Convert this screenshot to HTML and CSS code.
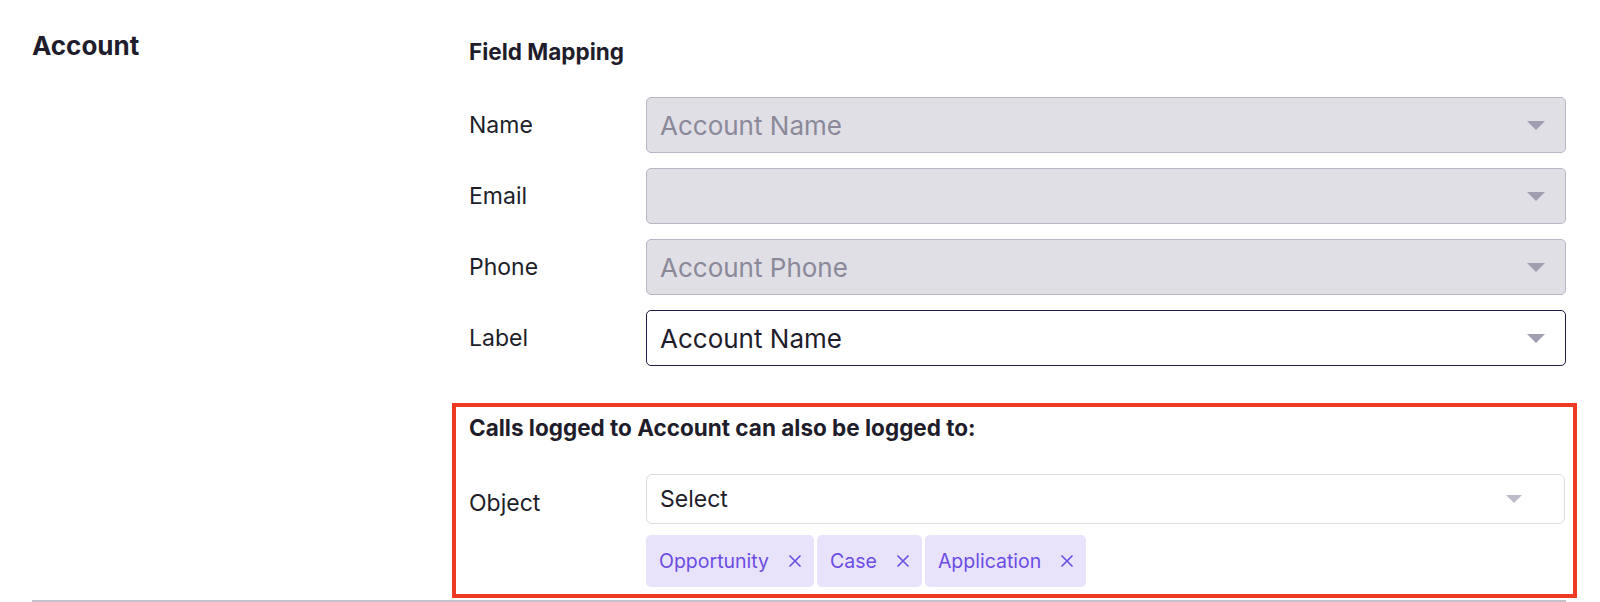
FILE: index.html
```html
<!DOCTYPE html>
<html>
<head>
<meta charset="utf-8">
<link rel="stylesheet" href="styles.css">
</head>
<body>
<section class="section">
  <h2 class="section-title">Account</h2>
  <div class="section-body">
    <h3 class="sub-title">Field Mapping</h3>
    <div class="rows">
      <div class="row">
        <span class="row-label">Name</span>
        <div class="select select-disabled"><span class="select-value">Account Name</span><span class="caret"></span></div>
      </div>
      <div class="row">
        <span class="row-label">Email</span>
        <div class="select select-disabled"><span class="select-value"></span><span class="caret"></span></div>
      </div>
      <div class="row">
        <span class="row-label">Phone</span>
        <div class="select select-disabled"><span class="select-value">Account Phone</span><span class="caret"></span></div>
      </div>
      <div class="row">
        <span class="row-label">Label</span>
        <div class="select select-active"><span class="select-value">Account Name</span><span class="caret"></span></div>
      </div>
    </div>
    <div class="highlight">
      <h3 class="sub-title">Calls logged to Account can also be logged to:</h3>
      <div class="object-row">
        <span class="row-label object-label">Object</span>
        <div class="object-field">
          <div class="select select-light"><span class="select-value">Select</span><span class="caret caret-light"></span></div>
          <div class="tags">
            <span class="tag">Opportunity<svg class="tag-x" viewBox="0 0 14 14"><path d="M1.5 1.5L12.5 12.5M12.5 1.5L1.5 12.5"/></svg></span>
            <span class="tag">Case<svg class="tag-x" viewBox="0 0 14 14"><path d="M1.5 1.5L12.5 12.5M12.5 1.5L1.5 12.5"/></svg></span>
            <span class="tag">Application<svg class="tag-x" viewBox="0 0 14 14"><path d="M1.5 1.5L12.5 12.5M12.5 1.5L1.5 12.5"/></svg></span>
          </div>
        </div>
      </div>
    </div>
  </div>
</section>
</body>
</html>
```
FILE: styles.css
```css
* { box-sizing: border-box; }
html, body { margin: 0; padding: 0; background: #ffffff; }
body {
  font-family: Inter, "Noto Sans", "Liberation Sans", sans-serif;
  color: #1f1d2b;
  height: 602px;
  overflow: hidden;
}
.section {
  margin-left: 32px;
  width: 1534px;
  display: grid;
  grid-template-columns: 437px 1fr;
  border-bottom: 2px solid #c3c2cb;
}
.section-title {
  margin: 32px 0 0 0;
  font-size: 26px;
  line-height: 28px;
  font-weight: 700;
  color: #1f1d2b;
}
.section-body {
  padding-top: 40px;
}
.sub-title {
  margin: 0;
  font-size: 22.5px;
  line-height: 24px;
  font-weight: 700;
  color: #1f1d2b;
}
.rows {
  margin-top: 33px;
  display: flex;
  flex-direction: column;
  gap: 15px;
}
.row {
  display: grid;
  grid-template-columns: 177px 1fr;
  align-items: center;
  height: 56px;
}
.row-label {
  font-size: 23px;
  line-height: 28px;
  color: #201e29;
}
.select {
  height: 56px;
  border-radius: 5px;
  display: flex;
  align-items: center;
  justify-content: space-between;
  padding: 0 20px 0 13px;
  font-size: 26px;
}
.select-disabled {
  background: #e0dfe6;
  border: 1.5px solid #b9b7c5;
  color: #8b8999;
}
.select-active {
  background: #ffffff;
  border: 1.5px solid #1e1b45;
  color: #1f1d2b;
}
.caret {
  width: 0;
  height: 0;
  border-left: 9px solid transparent;
  border-right: 9px solid transparent;
  border-top: 9px solid #a19eb1;
}
.highlight {
  margin: 37px -11px 2px -17px;
  border: 4px solid #ee3a22;
  padding: 9px 0 7px 13px;
}
.object-row {
  margin-top: 34px;
  display: grid;
  grid-template-columns: 177px 1fr;
  align-items: start;
  padding-right: 8px;
}
.object-label {
  padding-top: 15px;
}
.select-light {
  height: 50px;
  background: #ffffff;
  border: 1.5px solid #dddce3;
  border-radius: 6px;
  color: #1f1d2b;
  font-size: 23px;
  padding: 0 42px 0 13px;
}
.caret-light {
  border-left-width: 8px;
  border-right-width: 8px;
  border-top-width: 8px;
  border-top-color: #bdbbc9;
}
.tags {
  margin-top: 11px;
  display: flex;
  gap: 3px;
}
.tag {
  display: inline-flex;
  align-items: center;
  height: 52px;
  padding: 0 12px 0 13px;
  background: #e9e2fb;
  border-radius: 5px;
  color: #6b4de4;
  font-size: 19.5px;
}
.tag-x {
  width: 14px;
  height: 14px;
  margin-left: 19px;
  fill: none;
  stroke: #6b4de4;
  stroke-width: 1.6;
}
```
